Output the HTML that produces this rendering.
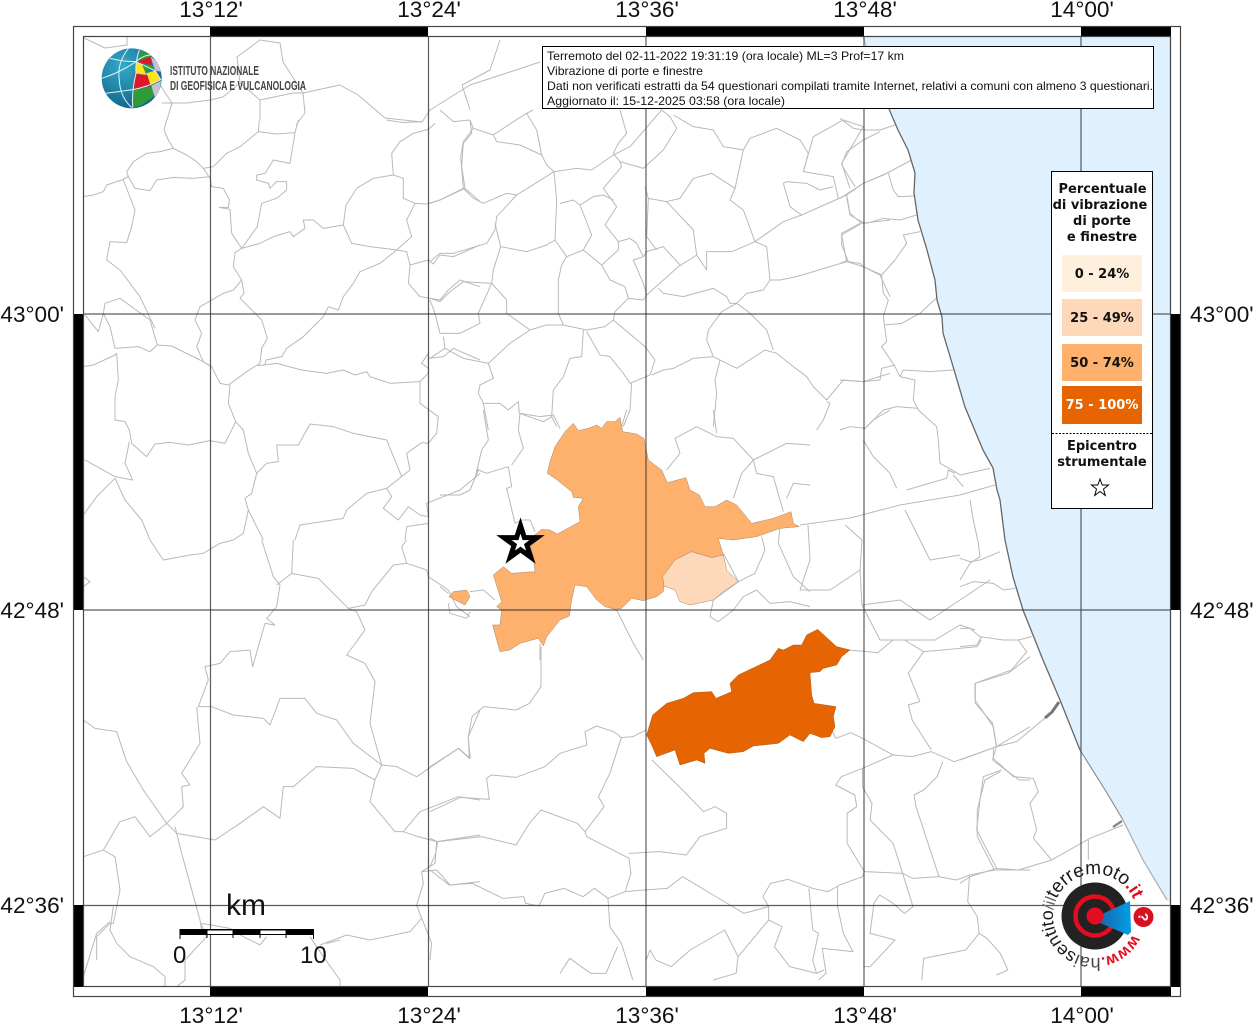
<!DOCTYPE html>
<html lang="it"><head><meta charset="utf-8"><title>Mappa</title>
<style>
html,body{margin:0;padding:0;background:#fff;width:1254px;height:1024px;overflow:hidden}
svg{display:block}
.b polyline{fill:none;stroke:#b9b9b9;stroke-width:1;vector-effect:non-scaling-stroke;stroke-linejoin:round}
.t{font-family:"Liberation Sans",Arial,sans-serif;font-size:22.6px;fill:#111}
.l{font-family:"Liberation Sans",Arial,sans-serif;font-size:12px;fill:#111}
.g{font-family:"DejaVu Sans",sans-serif;font-weight:700;font-size:13px;fill:#111;text-anchor:middle}
</style></head><body>
<svg xmlns="http://www.w3.org/2000/svg" width="1254" height="1024" viewBox="0 0 1254 1024">
<defs>
<radialGradient id="gl" cx=".35" cy=".3" r=".8"><stop offset="0" stop-color="#35a9c9"/><stop offset="1" stop-color="#0c5f85"/></radialGradient>
<linearGradient id="co" x1="0" x2="1" y1="0" y2="0"><stop offset="0" stop-color="#1b65ad"/><stop offset="1" stop-color="#00a0e6"/></linearGradient>
<clipPath id="fr"><rect x="83" y="36" width="1088" height="951"/></clipPath>
</defs>
<rect width="1254" height="1024" fill="#fff"/>
<polygon fill="#dff1fe" points="863,36 875,75 889,109 898,130 908,150 915,173 914,193 918,220 927,250 935,280 937,300 942,317 943,333 952,363 965,407 983,450 993,468 997,490 1000,500 1005,540 1013,577 1023,610 1043,660 1060,700 1080,750 1107,793 1123,820 1143,860 1167,900 1171,905 1171,36"/>

<g clip-path="url(#fr)">
<g class="b">
<polyline points="84,38 105,48 127,45 127,37"/>
<polyline points="162,103 187,103 210,100 223,97 240,83 237,57 260,40 280,43 283,62 303,93 305,113 296,125"/>
<polyline points="260,120 260,100 240,83"/>
<polyline points="260,100 293,93 303,93 340,85 358,95 385,118 422,122 430,110 470,85 510,72 540,62"/>
<polyline points="470,110 462,85 490,70 500,40"/>
<polyline points="167,120 172,103 160,85"/>
</g>
<g class="b" transform="translate(60,120) scale(.33333)">
<polyline points="70,230 100,225 130,215 140,195 185,180 205,170 200,155 220,125 260,100 300,95 340,85 325,60 312,30 320,0"/>
<polyline points="340,85 380,105 410,125 430,145 450,175 455,200 490,205 508,240 505,262 478,262 510,268 515,340 545,385"/>
<polyline points="430,145 460,140 500,100 540,80 595,35 650,42 705,38 715,0"/>
<polyline points="705,38 695,100 690,130 640,120 615,160 590,165 590,180 625,190 630,205 650,185 680,185 680,210 650,235 605,250 592,320 545,385"/>
<polyline points="595,35 598,0"/>
<polyline points="205,170 225,205 270,212 290,180 340,172 400,175 450,170"/>
<polyline points="190,180 225,270 215,320 200,368 150,365 140,420 180,450 240,530 285,625"/>
<polyline points="525,398 545,385 600,370 640,350 690,335 700,350 735,325 730,300 760,300 790,325 850,315 875,370 930,380 1010,390 1055,350 1040,300 1065,250 1030,235 1030,175 1000,165 995,100 1020,65 1060,40 1105,28 1125,10"/>
<polyline points="850,315 858,255 890,205 940,175 1000,165"/>
<polyline points="1065,250 1100,252 1140,240 1215,205 1205,140 1210,70 1235,40 1230,0"/>
<polyline points="1215,205 1260,245"/>
<polyline points="1010,390 1040,395 1050,435 1105,420 1120,432 1140,405 1180,410 1260,375"/>
<polyline points="1050,435 1045,490 1080,530 1140,540 1165,510 1200,480 1260,500"/>
<polyline points="525,398 520,440 545,480 520,510 490,520 420,560 405,600 425,640 410,680 430,725 455,740 480,790 505,795 560,755 600,730 605,685 622,655 605,600 540,535 552,520 545,480"/>
<polyline points="1010,390 960,430 900,455 880,490 850,530 835,570 805,560 790,590 730,650 680,685 665,710 618,720 615,735 595,737 650,730 725,750 800,760 850,750 885,765 920,755 930,770 990,790 1080,785 1105,760 1105,700 1085,730 1105,745"/>
<polyline points="1105,715 1150,710 1180,685 1260,720"/>
<polyline points="1080,785 1080,850 1135,890 1130,940 1105,970 1085,968 1040,1000 1050,1050 1025,1070 980,1105 920,1120 860,1170 850,1195 720,1215 705,1260"/>
<polyline points="1025,1070 980,960 880,940 820,920 750,912 715,975 650,975 655,1025 620,1030 590,1060 565,1000 550,930 527,905 505,850 510,795"/>
<polyline points="527,905 495,970 450,962 385,975 330,967 285,972 260,1010 215,970 208,930 195,905 165,900 165,830 175,780 170,700 165,705 100,735 70,740"/>
<polyline points="165,685 235,680 270,695 292,675 335,678 420,720 455,740"/>
<polyline points="292,675 270,600 180,535 135,550 130,580 150,620 165,685"/>
<polyline points="130,580 115,635 75,585"/>
<polyline points="208,965 195,1030 218,1080 165,1070 75,1020"/>
<polyline points="165,1075 110,1130 70,1185"/>
<polyline points="165,1075 195,1140 245,1200 270,1260"/>
<polyline points="590,1060 575,1120 555,1135 565,1170 590,1220 610,1260"/>
<polyline points="565,1170 550,1240 520,1260"/>
<polyline points="980,1105 995,1130 970,1165 1015,1200 1045,1160 1080,1185 1105,1190 1100,1150 1200,1110 1260,1060"/>
<polyline points="1105,1210 1040,1220 1035,1260"/>
<polyline points="980,0 1030,8 1085,5"/>
</g>
<g class="b" transform="translate(60,540) scale(.33333)">
<polyline points="270,0 310,60 390,45 430,40 480,10 520,0"/>
<polyline points="605,0 640,110 660,135 650,200 620,235 645,255 615,250 595,320 578,380 570,330 510,335 480,370 435,380 445,420 415,500 455,500 520,525 610,535 630,555 660,475 735,475 770,520 830,540 880,610 965,675 1010,680 1070,710 1195,625 1228,655 1225,590 1260,510"/>
<polyline points="700,0 695,100 650,135"/>
<polyline points="695,100 775,115 820,160 865,205 915,195 935,155 1000,75 1040,70 1025,20 1040,0"/>
<polyline points="1040,70 1100,90 1105,110 1165,150"/>
<polyline points="1165,150 1190,200 1230,230"/>
<polyline points="865,205 890,215 915,270 860,345 915,370 945,425 930,550 965,675 945,720 930,785 1005,875 1030,875 1075,890 1130,905 1260,885"/>
<polyline points="945,720 880,685 770,680 700,740 670,740 660,835 610,800 540,850 465,900 350,880 320,850 370,800 365,740 390,735 365,700 420,610 410,500"/>
<polyline points="320,850 250,750 200,665 170,575 105,565 70,540"/>
<polyline points="320,850 270,890 225,830 180,845 130,930 70,950"/>
<polyline points="130,930 165,950 180,1050 160,1150 150,1150 110,1190 110,1260"/>
<polyline points="345,860 365,940 420,1140 425,1170"/>
<polyline points="1030,875 1080,815 1195,770 1260,780"/>
<polyline points="1130,905 1125,970 1085,995 1090,1030 1070,1095 1085,1135 1050,1175 930,1200 860,1185 780,1215"/>
<polyline points="1085,995 1130,990 1170,1035 1260,1025"/>
<polyline points="1085,1135 1115,1210 1110,1260"/>
<polyline points="70,110 90,125 70,140"/>
</g>
<g class="b" transform="translate(70,880) scale(.33333)">
<polyline points="130,80 120,150 140,190 180,230 250,260 285,290 285,320"/>
<polyline points="120,125 80,160 40,290"/>
<polyline points="390,125 410,170 345,240 345,300 320,320"/>
<polyline points="395,130 480,145 520,170 570,195 590,170"/>
<polyline points="720,170 760,230 810,300 810,320"/>
<polyline points="810,180 770,190"/>
</g>
<g class="b" transform="translate(430,110) scale(.33333)">
<polyline points="0,280 30,270 100,235 92,140 100,95 130,55 190,75 200,95 270,105 335,135 350,165 372,185 300,230 260,255 230,250 160,280 130,265 100,235"/>
<polyline points="130,55 120,30 70,35 30,0"/>
<polyline points="190,75 250,35 290,10 310,0"/>
<polyline points="290,10 320,60 335,135"/>
<polyline points="372,185 440,175 485,180 550,135 600,110 695,0 720,20 740,55 700,120 640,175 570,155 550,130"/>
<polyline points="550,130 565,100 590,70 570,0"/>
<polyline points="570,155 575,170 520,235 560,290 525,345 565,395 600,385 620,400 640,440 650,425 700,410 750,465"/>
<polyline points="372,185 380,270 375,390 410,440 460,420 515,465 565,420 565,395"/>
<polyline points="390,280 430,270 450,285 490,260 520,255 550,270"/>
<polyline points="450,285 485,375 460,420"/>
<polyline points="0,455 30,430 70,430 170,400 195,360 200,320 260,255"/>
<polyline points="195,340 212,410 290,425 350,405 375,390"/>
<polyline points="212,410 190,480 185,520 100,515 60,545 30,575 0,565"/>
<polyline points="185,520 230,570 230,610 300,660 350,645 400,645 470,660 525,650 550,630 645,710 675,750 660,795 600,820 580,790 540,740 510,735 470,665"/>
<polyline points="410,440 395,465 385,510 385,610 400,645"/>
<polyline points="515,465 540,510 585,530 595,565 640,570 650,555 745,470 800,435 830,480 830,425 905,425 975,395 1060,335 1115,315 1250,255 1300,220 1380,185"/>
<polyline points="640,440 610,450 640,520 650,555"/>
<polyline points="595,565 555,605 550,630"/>
<polyline points="645,230 655,265 650,380 680,420"/>
<polyline points="655,265 710,275 750,265 790,205 845,190 915,235 940,120 880,110 850,60 790,50 730,15"/>
<polyline points="915,235 900,270 940,300 975,395 1010,410 1020,510 1000,540 950,550 920,580 875,605 835,660 830,690 850,740 920,775 1005,720 1040,730 1090,770 1130,800 1150,830 1190,870 1240,810 1300,815 1380,790"/>
<polyline points="1020,510 1050,510 1100,500 1250,455 1235,375 1295,340 1380,330"/>
<polyline points="1250,455 1300,470 1350,495 1380,560"/>
<polyline points="710,275 790,360 800,435"/>
<polyline points="940,120 960,85 1040,55 1110,90 1135,130 1120,185 1210,200 1225,265"/>
<polyline points="1120,185 1150,80 1240,30 1300,50 1235,160 1260,235"/>
<polyline points="1060,220 1070,215 1130,220 1170,240 1210,230"/>
<polyline points="1060,220 1080,290 1115,315"/>
<polyline points="1250,255 1260,310 1295,340"/>
<polyline points="685,535 700,550 760,560 850,535 890,560 900,580 920,580 955,605 1010,660 1030,720"/>
<polyline points="850,740 790,745 730,775 700,780 665,795"/>
<polyline points="870,750 855,810 860,850 850,950"/>
<polyline points="1190,875 1200,880 1180,930 1160,960"/>
<polyline points="0,570 15,610 30,670 90,670 150,640 145,610 185,520"/>
<polyline points="40,680 45,715 0,745"/>
<polyline points="45,715 100,745 175,760 240,700 300,660"/>
<polyline points="175,760 190,805 150,825 145,850 160,880 210,880 235,900 265,875 268,910 340,935 365,920 380,950"/>
<polyline points="160,880 175,960"/>
<polyline points="460,660 455,740 420,745 400,800 370,840 365,920"/>
<polyline points="605,820 600,900 580,950"/>
<polyline points="1380,900 1330,930 1300,960"/>
</g>
<g class="b" transform="translate(430,640) scale(.3827,.33333)">
<polyline points="290,20 290,140 260,190 225,210 140,200 110,230 100,290 105,355 75,325 0,380"/>
<polyline points="565,270 530,290 500,293 480,275 435,258 405,275 410,315 340,340 300,380 225,412 160,405 148,415 155,478 80,472 0,515"/>
<polyline points="500,293 470,400 440,470 455,500 405,575 385,550 290,510 260,550 225,615 135,590 20,605 0,595"/>
<polyline points="405,575 410,590 520,655 525,700 510,755 465,775 430,745 400,770 350,745 300,760 285,798 250,790 245,770 190,775 110,730 50,735 0,690"/>
<polyline points="20,605 15,640 0,680"/>
<polyline points="520,640 600,635 670,645 705,590 775,565 775,520 745,500 715,515 660,450 580,360"/>
<polyline points="465,775 470,860 500,910 530,1020"/>
<polyline points="510,755 560,750 620,745 660,710 740,765 820,820 885,800 870,770 890,730 935,718 1000,745 1040,755 1070,735 1130,710 1135,695 1090,610 1090,520 1115,500 1110,465 1060,435 1075,410 1130,385 1210,345 1260,350 1310,335 1370,365 1480,320 1568,260"/>
<polyline points="1130,385 1130,440 1155,490 1150,540 1210,610 1235,700 1135,695"/>
<polyline points="1235,700 1262,800 1240,820 1210,790 1175,765 1160,790 1150,880 1215,900 1150,980 1132,980"/>
<polyline points="1210,345 1130,295 1100,278 1060,295 1050,270"/>
<polyline points="1095,30 1170,38 1210,0"/>
<polyline points="1240,0 1290,35 1250,100 1280,185 1250,195 1260,240 1310,330"/>
<polyline points="1290,35 1340,30 1430,20 1440,0"/>
<polyline points="1568,50 1510,100 1425,130 1425,190 1470,250 1480,320 1470,360 1510,395 1540,420 1568,420"/>
<polyline points="1340,365 1325,410 1290,450 1265,465 1270,500 1330,710"/>
<polyline points="1490,395 1450,420 1430,510 1430,590 1475,690"/>
<polyline points="1235,700 1260,715 1330,710 1375,720 1410,705 1475,690 1568,690"/>
<polyline points="1410,705 1405,785 1430,830 1435,880 1455,895 1490,940 1510,990 1480,1005"/>
<polyline points="1435,880 1400,930 1290,955 1285,1020"/>
<polyline points="990,745 1000,870 1015,880 1000,960 1010,1000 1030,990"/>
<polyline points="1065,740 1065,800 1080,880 1105,935 1025,925 1035,1000 1015,1020"/>
<polyline points="885,800 885,840 805,950 770,870 680,930 630,980 590,960 575,930 565,960"/>
<polyline points="885,840 920,860 900,920 940,980 1010,1000"/>
<polyline points="805,950 800,1000 740,1020"/>
<polyline points="340,1000 365,955 420,1000 460,1000 490,920"/>
</g>
<g class="b" transform="translate(440,410) scale(.33333)">
<polyline points="0,255 60,255 90,240 115,180 140,190 205,170 215,230 200,235 225,340 245,330 270,330 285,365"/>
<polyline points="115,175 105,205 125,120 145,90 130,0"/>
<polyline points="215,165 250,115 235,60 240,10 300,20 340,15 360,55"/>
<polyline points="560,0 545,50"/>
<polyline points="0,530 25,550"/>
<polyline points="90,545 130,540 165,570"/>
<polyline points="25,580 30,610 80,625 90,605"/>
<polyline points="530,600 580,700 610,750"/>
<polyline points="300,700 300,750"/>
<polyline points="680,180 720,130 705,85 770,50 830,80 880,85 940,150 980,130 1040,100 1110,105"/>
<polyline points="820,0 830,70"/>
<polyline points="940,150 905,190 880,265"/>
<polyline points="940,150 950,190 1000,200 1030,305"/>
<polyline points="1040,265 1060,220 1110,225"/>
<polyline points="1020,350 1015,400 1060,500 1110,545"/>
<polyline points="850,430 895,515 945,490 975,420 965,380"/>
<polyline points="895,515 820,570 810,620 835,635 880,600 910,560 950,540 990,580 1050,575 1110,590"/>
</g>
<g class="b">
<polyline points="800,525 850,518 900,505 960,495 995,485"/>
<polyline points="808,525 810,560 800,590 830,590 860,570 862,540 845,525"/>
<polyline points="860,570 862,605 880,640 935,640 960,625 975,630"/>
<polyline points="960,555 930,560 915,530 905,510"/>
<polyline points="862,605 900,600 930,620 960,600 990,580"/>
</g>
<g class="b" transform="translate(840,90) scale(.33333)">
<polyline points="0,85 40,115 70,120 120,120 165,105"/>
<polyline points="120,125 70,150 20,185 5,225 45,290"/>
<polyline points="0,325 70,280 130,255 215,210"/>
<polyline points="145,250 160,300 175,320 222,318"/>
<polyline points="20,320 30,375 65,395 80,400 130,385 180,390 230,375"/>
<polyline points="60,400 5,430 5,465 25,515 60,520 70,530 125,555 165,510 200,460 190,435 240,425"/>
<polyline points="0,520 25,510"/>
<polyline points="125,555 130,610 145,630 130,680 140,755 125,770 165,830 180,860 190,840 270,845 340,840"/>
<polyline points="135,705 185,700 240,670 288,625"/>
<polyline points="165,825 125,835 120,870 70,875 0,870"/>
<polyline points="180,860 225,870 220,930 235,960 290,1010 295,1050 300,1120 345,1145 360,1155 450,1135"/>
<polyline points="235,955 170,950 130,960 100,990 75,1015 30,1010 0,1020"/>
<polyline points="70,1050 100,1100 150,1150 170,1195"/>
<polyline points="345,1150 325,1140 320,1165 250,1185 200,1200"/>
<polyline points="340,1155 370,1190"/>
</g>
<g class="b" transform="translate(960,500) scale(.33333)">
<polyline points="30,0 40,60 55,130 60,170 30,190 0,240"/>
<polyline points="0,175 30,185 60,180 120,155"/>
<polyline points="0,260 40,245 100,250 130,270 165,265"/>
<polyline points="0,385 30,385 60,410 130,420 175,420 215,410"/>
<polyline points="0,440 50,435 65,410"/>
<polyline points="175,420 200,455 155,510 45,550 45,600 100,680 110,740"/>
<polyline points="0,780 110,740 170,725 260,650"/>
<polyline points="100,745 100,775 160,830 220,835 235,875 210,910 230,990 220,1015 275,1080"/>
<polyline points="125,810 70,830 60,900 50,990 110,1105"/>
<polyline points="0,1150 30,1130 110,1105 175,1110 275,1080 390,1015 490,975"/>
<polyline points="385,1020 385,1080"/>
</g>
</g>

<!-- choropleth -->
<g transform="translate(440,410) scale(.33333)" stroke="#a08a70" stroke-width="1.5">
<polygon fill="#fdb16d" points="375,65 400,40 415,62 445,55 470,45 485,55 500,35 525,35 540,22 548,65 590,72 612,85 625,150 665,180 682,218 738,203 750,240 778,255 795,290 825,290 860,270 890,285 935,340 1000,325 1053,305 1060,340 1078,350 1020,355 950,380 880,390 835,385 850,435 815,443 755,425 705,450 695,480 668,500 672,528 670,545 650,560 610,572 575,565 545,595 525,598 495,590 470,570 440,530 405,525 395,570 388,618 360,630 320,680 310,708 295,685 240,700 210,720 180,725 170,690 158,645 180,645 185,600 170,590 185,575 160,495 190,470 215,490 280,485 285,490 280,440 265,390 305,358 330,360 352,372 420,335 415,290 430,265 400,262 395,245 345,205 322,190 330,155 345,110"/>
<polygon fill="#fdb16d" points="27,560 40,545 80,540 90,560 75,585 55,575"/>
<polygon fill="#fed9b9" points="668,500 705,450 755,425 815,443 850,435 860,480 895,515 850,545 820,570 750,585 720,575 705,540 672,528"/>
</g>
<polygon transform="translate(630,620) scale(.33333)" fill="#e66401" stroke="#b05a10" stroke-width="1.5" points="50,345 68,285 110,250 160,235 190,218 245,215 258,235 305,215 300,190 325,165 420,120 445,85 460,90 490,75 515,75 530,45 563,28 620,80 660,90 635,110 620,135 580,145 570,155 540,158 545,225 552,250 618,260 610,290 615,320 600,350 575,353 540,340 520,365 480,345 445,370 370,378 340,395 295,400 240,385 222,400 225,430 200,420 150,435 135,390 80,410 65,375"/>

<!-- coast -->
<polyline fill="none" stroke="#666" stroke-width="1.3" points="889,109 898,130 908,150 915,173 914,193 918,220 927,250 935,280 937,300 942,317 943,333 952,363 965,407 983,450 993,468 997,490 1000,500 1005,540 1013,577 1023,610 1043,660 1060,700 1080,750"/>
<polyline fill="none" stroke="#888" stroke-width="1.1" points="1080,750 1107,793 1123,820"/>
<polyline fill="none" stroke="#aaa" stroke-width="1.2" points="1123,820 1143,860 1167,900"/>
<polyline fill="none" stroke="#bbb" stroke-width="1" points="863,36 875,75 889,109"/>
<path d="M1045,718 L1052,712 L1059,702" stroke="#777" stroke-width="3" fill="none"/>
<path d="M1113,827 L1122,821" stroke="#888" stroke-width="2.5" fill="none"/>

<!-- grid -->
<g stroke="#333" stroke-opacity=".8" stroke-width="1.2" fill="none">
<path d="M210.5 36V987M428.5 36V987M646 36V987M864 36V987M1081 36V987"/>
<path d="M83 314H1171M83 610H1171M83 905.5H1171"/>
</g>

<!-- frame -->
<g fill="#000">
<rect x="210" y="26" width="218" height="10"/><rect x="646" y="26" width="218" height="10"/><rect x="1081" y="26" width="90" height="10"/>
<rect x="210" y="987" width="218" height="10"/><rect x="646" y="987" width="218" height="10"/><rect x="1081" y="987" width="90" height="10"/>
<rect x="73" y="314" width="10" height="296"/><rect x="73" y="905" width="10" height="82"/>
<rect x="1171" y="314" width="10" height="296"/><rect x="1171" y="905" width="10" height="82"/>
</g>
<g fill="none" stroke="#444" stroke-width="1.2">
<rect x="73.5" y="26.5" width="1107" height="970"/>
<rect x="83.5" y="36.5" width="1087" height="950"/>
</g>

<!-- tick labels -->
<g class="t" text-anchor="middle">
<text x="211" y="17">13°12'</text><text x="429" y="17">13°24'</text><text x="647" y="17">13°36'</text><text x="865" y="17">13°48'</text><text x="1082" y="17">14°00'</text>
<text x="211" y="1023">13°12'</text><text x="429" y="1023">13°24'</text><text x="647" y="1023">13°36'</text><text x="865" y="1023">13°48'</text><text x="1082" y="1023">14°00'</text>
</g>
<g class="t" text-anchor="end">
<text x="64" y="322">43°00'</text><text x="64" y="618">42°48'</text><text x="64" y="913">42°36'</text>
</g>
<g class="t">
<text x="1190" y="322">43°00'</text><text x="1190" y="618">42°48'</text><text x="1190" y="913">42°36'</text>
</g>

<!-- logo INGV -->
<g transform="translate(60,0) scale(.33333)">
<circle cx="215" cy="235" r="90" fill="url(#gl)"/>
<polygon fill="#2f9a3a" points="232,180 245,152 268,163 274,172"/>
<polygon fill="#e0162b" points="230,185 272,170 276,195 245,190"/>
<polygon fill="#ffe21c" points="228,188 250,195 258,225 228,220"/>
<polygon fill="#2f9a3a" points="245,192 276,195 282,205 255,215"/>
<polygon fill="#c9bfd0" points="272,170 292,185 303,215 285,212"/>
<polygon fill="#ffe21c" points="258,220 285,212 302,240 272,255"/>
<polygon fill="#e0162b" points="224,222 262,225 272,258 222,268"/>
<polygon fill="#c9bfd0" points="272,258 304,242 298,272 285,292"/>
<polygon fill="#2f9a3a" points="220,270 275,258 282,290 245,315 218,324"/>
<g fill="none" stroke="#dff2f6" stroke-width="3">
<path d="M125,235 Q175,220 228,185 Q250,165 272,165"/>
<path d="M150,175 Q190,185 228,185 Q260,200 285,212 L303,240"/>
<path d="M135,280 Q180,275 222,268 Q260,262 300,240"/>
<path d="M205,146 Q170,190 178,240 Q180,290 215,323"/>
<path d="M238,150 Q225,185 228,220 Q215,270 218,323"/>
</g>
</g>
<g font-family="'Liberation Sans',Arial,sans-serif" fill="#444" font-size="13" font-weight="700">
<text x="170" y="75" textLength="89" lengthAdjust="spacingAndGlyphs">ISTITUTO NAZIONALE</text>
<text x="170" y="90" textLength="136" lengthAdjust="spacingAndGlyphs">DI GEOFISICA E VULCANOLOGIA</text>
</g>

<!-- info box -->
<rect x="542.5" y="46.5" width="611" height="62" fill="#fff" stroke="#000"/>
<g class="l">
<text x="547" y="60" textLength="357" lengthAdjust="spacingAndGlyphs">Terremoto del 02-11-2022 19:31:19 (ora locale) ML=3 Prof=17 km</text>
<text x="547" y="75" textLength="156" lengthAdjust="spacingAndGlyphs">Vibrazione di porte e finestre</text>
<text x="547" y="90" textLength="606" lengthAdjust="spacingAndGlyphs">Dati non verificati estratti da 54 questionari compilati tramite Internet, relativi a comuni con almeno 3 questionari.</text>
<text x="547" y="105" textLength="238" lengthAdjust="spacingAndGlyphs">Aggiornato il: 15-12-2025 03:58 (ora locale)</text>
</g>

<!-- legend -->
<rect x="1051.5" y="171.5" width="101" height="337" fill="#fff" stroke="#000"/>
<rect x="1062" y="255" width="80" height="37" fill="#fff0de"/>
<rect x="1062" y="299" width="80" height="37" fill="#fed9b9"/>
<rect x="1062" y="344" width="80" height="37" fill="#fdb16d"/>
<rect x="1062" y="386" width="80" height="38" fill="#e66401"/>
<g class="g">
<text x="1102.5" y="193">Percentuale</text>
<text x="1100" y="209">di vibrazione</text>
<text x="1102" y="225">di porte</text>
<text x="1102" y="241">e finestre</text>
<text x="1102" y="278">0 - 24%</text>
<text x="1102" y="322">25 - 49%</text>
<text x="1102" y="367">50 - 74%</text>
<text x="1102" y="409" style="fill:#fff">75 - 100%</text>
<text x="1102" y="450">Epicentro</text>
<text x="1102" y="466">strumentale</text>
</g>
<line x1="1052" x2="1152" y1="433.5" y2="433.5" stroke="#000" stroke-dasharray="2 1.5"/>
<polygon fill="#fff" stroke="#000" stroke-width="1" points="1100,479 1102.2,485 1108.5,485 1103.5,489 1105.3,495.5 1100,491.5 1094.7,495.5 1096.5,489 1091.5,485 1097.8,485"/>

<!-- scale bar -->
<rect x="180" y="929" width="133" height="6" fill="#000"/>
<rect x="207" y="930.5" width="26" height="3.5" fill="#fff"/>
<rect x="260" y="930.5" width="26" height="3.5" fill="#fff"/>
<path d="M180 929V939M207 929V938M233 929V938M260 929V938M286 929V938M313.5 929V939" stroke="#000" stroke-width="1" fill="none"/>
<g font-family="'Liberation Sans',Arial,sans-serif" fill="#111">
<text x="226" y="915" font-size="30">km</text>
<text x="173" y="963" font-size="24">0</text>
<text x="300" y="963" font-size="24">10</text>
</g>

<!-- epicentre star -->
<polygon transform="translate(0,1)" fill="#fff" stroke="#000" stroke-width="5" stroke-miterlimit="10" points="520.5,524.5 524.4,536.6 537.1,536.6 526.9,544.1 530.8,556.2 520.5,548.7 510.2,556.2 514.1,544.1 503.9,536.6 516.6,536.6"/>

<!-- haisentito logo -->
<circle cx="1095" cy="916" r="33.5" fill="#222"/>
<circle cx="1095" cy="916" r="19.5" fill="none" stroke="#e30d1f" stroke-width="4.5"/>
<polygon fill="url(#co)" points="1100,915 1130,901 1131,932 1128,935 1100,923"/>
<circle cx="1095" cy="916" r="8.5" fill="#e30d1f"/>
<circle cx="1143.5" cy="917" r="10" fill="#d9101f"/>
<text x="1143.5" y="922" text-anchor="middle" font-family="'Liberation Sans',sans-serif" font-weight="700" font-size="14" fill="#fff" transform="rotate(90 1143.5 917)">?</text>
<path id="ring" d="M1132.7,934.4 A42,42 0 1 1 1132.7,897.6" fill="none"/>
<text font-family="'Liberation Sans',Arial,sans-serif" font-size="18" fill="#1a1a1a"><textPath href="#ring"><tspan fill="#e30d1f" font-weight="700" font-size="16">www.</tspan><tspan fill="#444">hai</tspan>sentito<tspan fill="#666" font-size="16">/il</tspan><tspan font-size="19">terremoto</tspan><tspan fill="#e30d1f" font-weight="700">.it</tspan></textPath></text>
</svg>
</body></html>
